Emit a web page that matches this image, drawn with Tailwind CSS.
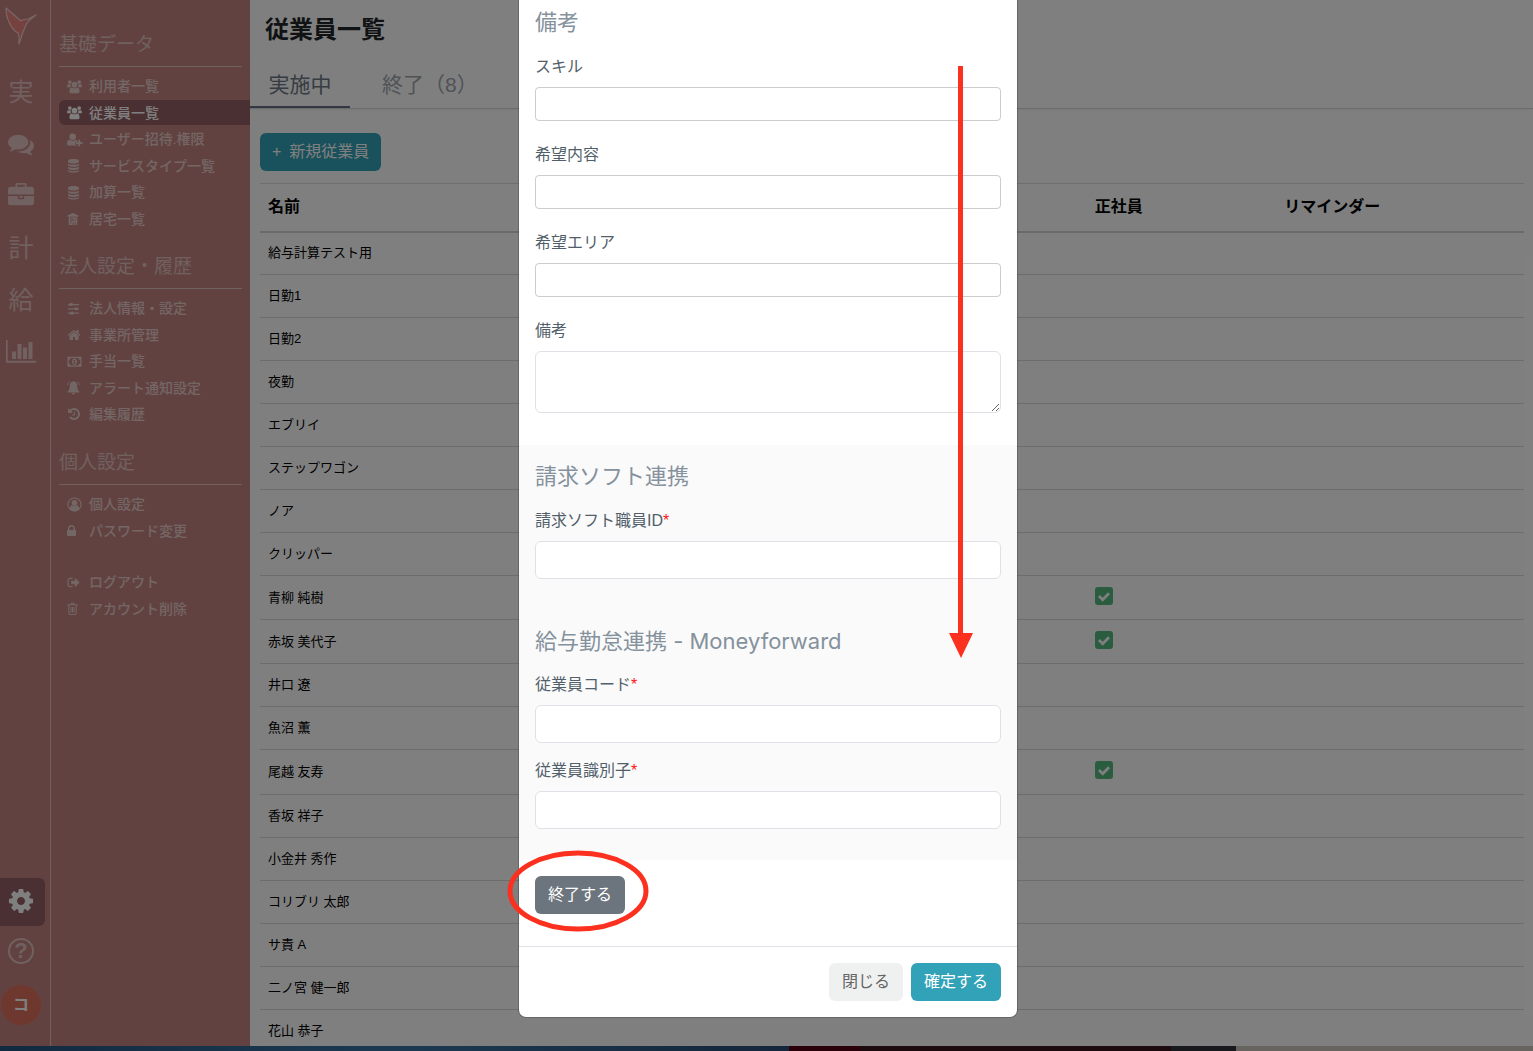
<!DOCTYPE html>
<html lang="ja">
<head>
<meta charset="utf-8">
<meta name="viewport" content="width=device-width, initial-scale=1">
<title>従業員一覧</title>
<script src="https://cdn.jsdelivr.net/npm/@tailwindcss/browser@4"></script>
</head>
<body class="flex h-screen flex-col overflow-hidden bg-white font-['Liberation_Sans','Noto_Sans_CJK_JP',sans-serif] text-base leading-6 text-black">

<svg class="hidden" aria-hidden="true">
  <symbol id="i-users" viewBox="0 0 16 16"><circle cx="3" cy="3.2" r="2"/><circle cx="13" cy="3.2" r="2"/><path d="M0 8.2C0 6.6.5 5.5 1.4 5.5c.8.5 1.9.6 2.9.3C3.8 7 4 8 4.6 8.700H1.200C.5 8.700 0 8.600 0 8.200zM16 8.200c0-1.600-.5-2.700-1.400-2.700-.8.500-1.900.600-2.900.300C12.200 7 12 8 11.400 8.700h3.400c.7 0 1.200-.1 1.200-.5z"/><circle cx="8" cy="6" r="3"/><path d="M2.600 13.200C2.600 10.700 3.500 9 5.300 9c1.600 1.200 3.800 1.200 5.400 0 1.800 0 2.700 1.700 2.700 4.200 0 1.300-.9 2.100-2.100 2.100H4.700c-1.200 0-2.100-.8-2.100-2.100z"/></symbol>
  <symbol id="i-user-plus" viewBox="0 0 17 16"><circle cx="6" cy="5" r="3.500"/><path d="M0 12.500C0 10 1 8.300 2.800 8.300c2 1.400 4.400 1.400 6.400 0 .6 0 1.100.2 1.500.6v1.800H8.800v3h1.900v.8H2C.8 14.500 0 13.700 0 12.500z"/><path d="M12 8.300h2v2.400h2.500v2H14v2.400h-2v-2.400H9.500v-2H12z"/></symbol>
  <symbol id="i-database" viewBox="0 0 14 16"><path d="M1 3.200C1 .4 13 .4 13 3.200v.8C13 6.600 1 6.600 1 4zM1 6c2.500 1.700 9.500 1.700 12 0v1.500c0 2.500-12 2.500-12 0zM1 9.400c2.500 1.700 9.500 1.700 12 0v1.500c0 2.500-12 2.500-12 0zM1 12.800c2.500 1.700 9.500 1.700 12 0v.8c0 2.500-12 2.500-12 0z"/></symbol>
  <symbol id="i-building" viewBox="0 0 14 16"><path d="M7 1l6.500 3v1.500H.5V4zM2 6.300h10V15H2z"/><path d="M4.500 8v5.500M4.500 8H7v2.500M9.300 8v2.500M7.200 12v3M9.700 12v3" stroke="#c48480" stroke-width="1" fill="none"/></symbol>
  <symbol id="i-sliders" viewBox="0 0 14 16"><path d="M1 3.200h12v1.200H1zM1 7.800h12V9H1zM1 12.400h12v1.200H1zM3 2.200h3v3.200H3zM8.500 6.800h3V10h-3zM4 11.400h3v3.200H4z"/></symbol>
  <symbol id="i-home" viewBox="0 0 1792 1792"><path d="M1472 992v480q0 26-19 45t-45 19h-384v-384h-256v384h-384q-26 0-45-19t-19-45v-480q0-1 .5-3t.5-3l575-474 575 474q1 2 1 6zm223-69l-62 74q-8 9-21 11h-3q-13 0-21-7l-692-577-692 577q-12 8-24 7-13-2-21-11l-62-74q-8-10-7-23.5t11-21.5l719-599q32-26 76-26t76 26l244 204v-195q0-14 9-23t23-9h192q14 0 23 9t9 23v408l219 182q10 8 11 21.500t-7 23.500z"/></symbol>
  <symbol id="i-money" viewBox="0 0 16 16"><path fill-rule="evenodd" d="M.5 3h15v10.500H.5zM3.800 4.200c0 1.200-.9 2-2 2v4c1.100 0 2 .9 2 2h8.400c0-1.100.9-2 2-2v-4c-1.100 0-2-.8-2-2z"/><path fill-rule="evenodd" d="M8 4.800a2.500 3.400 0 1 1 0 6.800 2.500 3.400 0 1 1 0-6.800zM7.500 6.300l-1 .9.500.6.400-.3v2h-.9v.8h2.900v-.8h-.9V6.300z"/></symbol>
  <symbol id="i-bell" viewBox="0 0 14 16"><path d="M6.300 1.500a.8.800 0 0 1 1.400 0C10 2 11 3.700 11 6c0 3.500.8 5 2.500 6.500 0 .5-.4 1-1 1h-11c-.6 0-1-.5-1-1C2.200 11 3 9.500 3 6c0-2.300 1-4 3.300-4.500zM5.200 14h3.600a1.800 1.500 0 0 1-3.600 0z"/><path d="M2.800 1.500C1.600 2.500 1 3.800.9 5.500M11.200 1.500c1.200 1 1.800 2.300 1.900 4" fill="none" stroke="currentColor" stroke-width=".9"/></symbol>
  <symbol id="i-history" viewBox="0 0 1792 1792"><path d="M1664 896q0 156-61 298t-164 245-245 164-298 61q-172 0-327-72.500t-264-204.500q-7-10-6.500-22.500t8.500-20.500l137-138q10-9 25-9 16 2 23 12 73 95 179 147t225 52q104 0 198.500-40.500t163.500-109.500 109.500-163.500 40.500-198.500-40.500-198.500-109.500-163.500-163.500-109.500-198.500-40.500q-98 0-188 35.500t-160 101.500l137 138q31 30 14 69-17 40-59 40h-448q-26 0-45-19t-19-45v-448q0-42 40-59 39-17 69 14l130 129q107-101 244.500-156.500t284.500-55.500q156 0 298 61t245 164 164 245 61 298zm-640-288v448q0 14-9 23t-23 9h-320q-14 0-23-9t-9-23v-64q0-14 9-23t23-9h224v-352q0-14 9-23t23-9h64q14 0 23 9t9 23z"/></symbol>
  <symbol id="i-user-circle" viewBox="0 0 16 16"><circle cx="8" cy="8" r="7" fill="none" stroke="currentColor" stroke-width="1.200"/><circle cx="8" cy="6.300" r="3"/><path d="M3 12.200c.3-2 1-3.200 2.500-3.500 1.500 1.200 3.500 1.200 5 0 1.500.3 2.200 1.500 2.500 3.500-2.500 3-7.500 3-10 0z"/></symbol>
  <symbol id="i-lock" viewBox="320 0 1152 1792"><path d="M640 768h512v-192q0-106-75-181t-181-75-181 75-75 181v192zm832 96v576q0 40-28 68t-68 28h-960q-40 0-68-28t-28-68v-576q0-40 28-68t68-28h32v-192q0-184 132-316t316-132 316 132 132 316v192h32q40 0 68 28t28 68z"/></symbol>
  <symbol id="i-logout" viewBox="0 0 14 16"><path d="M6 3.500H3.500C2 3.500 1.200 4.300 1.200 5.800v4.400c0 1.500.8 2.300 2.300 2.300H6" fill="none" stroke="currentColor" stroke-width="1.200"/><path d="M4.500 6h4V3L13.500 8l-5 5v-3h-4z"/></symbol>
  <symbol id="i-trash" viewBox="0 0 12 16"><path d="M.5 4h11M4 4l.6-1.800h2.800L8 4M2 4v9.500c0 .6.400 1 1 1h6c.6 0 1-.4 1-1V4M4.300 6.300v6M6 6.300v6M7.700 6.300v6" fill="none" stroke="currentColor" stroke-width="1.100"/></symbol>
  <symbol id="i-comments" viewBox="0 0 1792 1792"><path d="M1408 768q0 139-94 257t-256.500 186.500-353.500 68.500q-86 0-176-16-124 88-278 128-36 9-86 16h-3q-11 0-20.500-8t-11.500-21q-1-3-1-6.500t.5-6.500 2-6l2.500-5 3.500-5.500 4-5 4.500-5 4-4.500q5-6 23-25t26-29.500 22.500-29 25-38.500 20.500-44q-124-72-195-177t-71-224q0-139 94-257t256.500-186.500 353.500-68.500 353.500 68.500 256.500 186.500 94 257zm384 256q0 120-71 224.500t-195 176.500q10 24 20.500 44t25 38.500 22.500 29 26 29.500 23 25q1 1 4 4.500t4.500 5 4 5 3.500 5.500l2.500 5 2 6 .5 6.500-1 6.500q-3 14-13 22t-22 7q-50-7-86-16-154-40-278-128-90 16-176 16-271 0-472-132 58 4 88 4 161 0 309-45t264-129q125-92 192-212t67-254q0-77-23-152 129 71 204 178t75 230z"/></symbol>
  <symbol id="i-briefcase" viewBox="0 0 1792 1792"><path d="M640 256h512v-128h-512v128zm1152 640v480q0 66-47 113t-113 47h-1472q-66 0-113-47t-47-113v-480h672v160q0 26 19 45t45 19h320q26 0 45-19t19-45v-160h672zm-768 0v128h-256v-128h256zm768-480v384h-1792v-384q0-66 47-113t113-47h352v-160q0-40 28-68t68-28h576q40 0 68 28t28 68v160h352q66 0 113 47t47 113z"/></symbol>
  <symbol id="i-chart" viewBox="0 0 30 24"><path d="M0 0h1.700v20.700H30v2H0zM6 11.500h4V19H6zM11.500 4h4v15h-4zM17 7.500h4V19h-4zM22.500 2h4v17h-4z"/></symbol>
  <symbol id="i-cog" viewBox="128 128 1536 1536"><path d="M1152 896q0-106-75-181t-181-75-181 75-75 181 75 181 181 75 181-75 75-181zm512-109v222q0 12-8 23t-20 13l-185 28q-19 54-39 91 35 50 107 138 10 12 10 25t-9 23q-27 37-99 108t-94 71q-12 0-26-9l-138-108q-44 23-91 38-16 136-29 186-7 28-36 28h-222q-14 0-24.500-8.500t-11.500-21.500l-28-184q-49-16-90-37l-141 107q-10 9-25 9-14 0-25-11-126-114-165-168-7-10-7-23 0-12 8-23 15-21 51-66.500t54-70.500q-27-50-41-99l-183-27q-13-2-21-12.500t-8-23.500v-222q0-12 8-23t19-13l186-28q14-46 39-92-40-57-107-138-10-12-10-24 0-10 9-23 26-36 98.500-107.500t94.500-71.500q13 0 26 10l138 107q44-23 91-38 16-136 29-186 7-28 36-28h222q14 0 24.500 8.500t11.500 21.500l28 184q49 16 90 37l142-107q9-9 24-9 13 0 25 10 129 119 165 170 7 8 7 22 0 12-8 23-15 21-51 66.500t-54 70.500q26 50 41 98l183 28q13 2 21 12.500t8 23.500z"/></symbol>
  <symbol id="i-check" viewBox="0 0 18 18"><path d="M4 9l3.700 3.700L14 6.300" fill="none" stroke="#fff" stroke-width="2.800"/></symbol>
</svg>

<div class="relative flex min-h-0 flex-1 overflow-hidden">

  <!-- Icon rail -->
  <nav class="flex w-[51px] shrink-0 flex-col border-r border-white/50 bg-[#c48480] text-white/50" aria-label="メイン">
    <a href="#" class="block h-[66px] pt-[7px] pl-[5px]" aria-label="ホーム">
      <svg class="h-[38px] w-8" viewBox="0 0 32 38"><path d="M1 1L16 14C18 12 20 12 23 12L31 8L26 12C23 14 22 15 21 18L18 25L14 37C14 33 15 30 13 26C9 24 6 20 4 15C2 11 1 6 1 1z" fill="#ea8480" stroke="#fff" stroke-opacity=".6" stroke-width="1.200" stroke-linejoin="round"/></svg>
    </a>
    <ul class="w-[42px] text-center text-[25px] leading-[52px]">
      <li><a href="#" class="block h-[52px]">実</a></li>
      <li><a href="#" class="flex h-[52px] items-center justify-center" aria-label="メッセージ"><svg class="size-[26px] fill-current"><use href="#i-comments"/></svg></a></li>
      <li><a href="#" class="flex h-[52px] items-center justify-center" aria-label="業務"><svg class="size-[26px] fill-current"><use href="#i-briefcase"/></svg></a></li>
      <li><a href="#" class="block h-[52px]">計</a></li>
      <li><a href="#" class="block h-[52px]">給</a></li>
      <li><a href="#" class="flex h-[52px] items-center justify-center" aria-label="統計"><svg class="h-6 w-[30px] fill-current"><use href="#i-chart"/></svg></a></li>
    </ul>
    <div class="mt-auto pb-[21px]">
      <a href="#" class="flex h-12 w-[45px] items-center rounded-r-md bg-[#946064] pb-0.5 pl-[9px] text-white" aria-label="設定"><svg class="size-6 fill-current"><use href="#i-cog"/></svg></a>
      <a href="#" class="flex h-[50px] w-[42px] items-center justify-center" aria-label="ヘルプ"><span class="flex size-[26px] items-center justify-center rounded-full border-2 border-current text-[22px] leading-none font-bold">?</span></a>
      <a href="#" class="mt-[9px] ml-px flex size-10 items-center justify-center rounded-full bg-[#de705e] text-base font-bold text-white" aria-label="アカウント">コ</a>
    </div>
  </nav>

  <!-- Settings menu -->
  <nav class="w-[199px] shrink-0 bg-[#c48480] pt-[29px] pl-2 text-sm font-medium text-white/60" aria-label="設定メニュー">
    <h2 class="mr-2 mb-1.5 border-b border-white/50 pb-[5px] text-[19px] leading-8 font-normal text-white/50">基礎データ</h2>
    <ul>
      <li class="flex h-[26px] items-center"><a href="#" class="flex h-[25px] w-full items-center pl-2"><span class="w-[22px]"><svg class="size-[15px] fill-current"><use href="#i-users"/></svg></span>利用者一覧</a></li>
      <li class="flex h-[27px] items-center"><a href="#" class="flex h-[25px] w-full items-center rounded-l-md bg-[#946064] pl-2 text-white"><span class="w-[22px]"><svg class="size-[15px] fill-current"><use href="#i-users"/></svg></span>従業員一覧</a></li>
      <li class="flex h-[26px] items-center"><a href="#" class="flex h-[25px] w-full items-center pl-2"><span class="w-[22px]"><svg class="h-[15px] w-4 fill-current"><use href="#i-user-plus"/></svg></span>ユーザー招待.権限</a></li>
      <li class="flex h-[27px] items-center"><a href="#" class="flex h-[25px] w-full items-center pl-2"><span class="w-[22px]"><svg class="h-[15px] w-[13px] fill-current"><use href="#i-database"/></svg></span>サービスタイプ一覧</a></li>
      <li class="flex h-[26px] items-center"><a href="#" class="flex h-[25px] w-full items-center pl-2"><span class="w-[22px]"><svg class="h-[15px] w-[13px] fill-current"><use href="#i-database"/></svg></span>加算一覧</a></li>
      <li class="flex h-[27px] items-center"><a href="#" class="flex h-[25px] w-full items-center pl-2"><span class="w-[22px]"><svg class="h-[14px] w-3 fill-current"><use href="#i-building"/></svg></span>居宅一覧</a></li>
    </ul>

    <h2 class="mt-[19px] mr-2 mb-1.5 border-b border-white/50 pb-[5px] text-[19px] leading-8 font-normal text-white/50">法人設定・履歴</h2>
    <ul>
      <li class="flex h-[26px] items-center"><a href="#" class="flex h-[25px] w-full items-center pl-2"><span class="w-[22px]"><svg class="h-[15px] w-[13px] fill-current"><use href="#i-sliders"/></svg></span>法人情報・設定</a></li>
      <li class="flex h-[27px] items-center"><a href="#" class="flex h-[25px] w-full items-center pl-2"><span class="w-[22px]"><svg class="size-[14px] fill-current"><use href="#i-home"/></svg></span>事業所管理</a></li>
      <li class="flex h-[26px] items-center"><a href="#" class="flex h-[25px] w-full items-center pl-2"><span class="w-[22px]"><svg class="size-[15px] fill-current"><use href="#i-money"/></svg></span>手当一覧</a></li>
      <li class="flex h-[27px] items-center"><a href="#" class="flex h-[25px] w-full items-center pl-2"><span class="w-[22px]"><svg class="h-[15px] w-[13px] fill-current"><use href="#i-bell"/></svg></span>アラート通知設定</a></li>
      <li class="flex h-[26px] items-center"><a href="#" class="flex h-[25px] w-full items-center pl-2"><span class="w-[22px]"><svg class="size-[14px] fill-current"><use href="#i-history"/></svg></span>編集履歴</a></li>
    </ul>

    <h2 class="mt-[20px] mr-2 mb-1.5 border-b border-white/50 pb-[5px] text-[19px] leading-8 font-normal text-white/50">個人設定</h2>
    <ul>
      <li class="flex h-[26px] items-center"><a href="#" class="flex h-[25px] w-full items-center pl-2"><span class="w-[22px]"><svg class="size-[15px] fill-current"><use href="#i-user-circle"/></svg></span>個人設定</a></li>
      <li class="flex h-[27px] items-center"><a href="#" class="flex h-[25px] w-full items-center pl-2"><span class="w-[22px]"><svg class="h-[14px] w-[9px] fill-current"><use href="#i-lock"/></svg></span>パスワード変更</a></li>
    </ul>
    <ul class="mt-[25px]">
      <li class="flex h-[26px] items-center"><a href="#" class="flex h-[25px] w-full items-center pl-2"><span class="w-[22px]"><svg class="h-[15px] w-[13px] fill-current"><use href="#i-logout"/></svg></span>ログアウト</a></li>
      <li class="flex h-[27px] items-center"><a href="#" class="flex h-[25px] w-full items-center pl-2"><span class="w-[22px]"><svg class="h-[15px] w-[11px] fill-current"><use href="#i-trash"/></svg></span>アカウント削除</a></li>
    </ul>
  </nav>

  <!-- Employee list -->
  <main class="min-w-0 flex-1">
    <h1 class="h-[60px] pl-[15px] text-2xl leading-[60px] font-bold text-[#212529]">従業員一覧</h1>
    <div class="flex h-[49px] border-b border-[#d4d6d8] text-[21px] leading-[49px] shadow-xs">
      <a href="#" class="w-[100px] border-b-2 border-[#646e82] text-center text-[#6e7886]">実施中</a>
      <a href="#" class="pl-8 text-[#a0a6ac]">終了（8）</a>
    </div>
    <div class="pt-6 pr-[9px] pl-2.5">
      <button type="button" class="mb-3 flex h-[38px] items-center gap-2 rounded-md bg-[#32a2b8] px-3 text-white"><span>+</span>新規従業員</button>
      <table class="w-full table-fixed border-collapse text-left text-[13px] leading-5">
        <thead class="text-base font-bold">
          <tr class="h-12 border-t border-b-2 border-t-[#dcdcdc] border-b-[#d4d4d4]">
            <th scope="col" class="w-[65.4%] px-2">名前</th>
            <th scope="col" class="w-[15%] px-2">正社員</th>
            <th scope="col" class="px-2">リマインダー</th>
          </tr>
        </thead>
        <tbody class="[&_td]:px-2 [&_td]:py-0 [&_tr]:border-b [&_tr]:border-[#d8d8d8]">
          <tr class="h-[43px]"><td>給与計算テスト用</td><td></td><td></td></tr>
          <tr class="h-[43px]"><td>日勤1</td><td></td><td></td></tr>
          <tr class="h-[43px]"><td>日勤2</td><td></td><td></td></tr>
          <tr class="h-[43px]"><td>夜勤</td><td></td><td></td></tr>
          <tr class="h-[43px]"><td>エブリイ</td><td></td><td></td></tr>
          <tr class="h-[43px]"><td>ステップワゴン</td><td></td><td></td></tr>
          <tr class="h-[43px]"><td>ノア</td><td></td><td></td></tr>
          <tr class="h-[43px]"><td>クリッパー</td><td></td><td></td></tr>
          <tr class="h-11"><td>青柳 純樹</td><td><span class="relative mb-1 block size-[18px]"><input type="checkbox" checked disabled aria-label="正社員" class="block size-[18px] appearance-none rounded-[3px] bg-[#54b880]"><svg class="absolute inset-0 size-[18px]"><use href="#i-check"/></svg></span></td><td></td></tr>
          <tr class="h-11"><td>赤坂 美代子</td><td><span class="relative mb-1 block size-[18px]"><input type="checkbox" checked disabled aria-label="正社員" class="block size-[18px] appearance-none rounded-[3px] bg-[#54b880]"><svg class="absolute inset-0 size-[18px]"><use href="#i-check"/></svg></span></td><td></td></tr>
          <tr class="h-[43px]"><td>井口 遼</td><td></td><td></td></tr>
          <tr class="h-[43px]"><td>魚沼 薫</td><td></td><td></td></tr>
          <tr class="h-[45px]"><td>尾越 友寿</td><td><span class="relative mb-1 block size-[18px]"><input type="checkbox" checked disabled aria-label="正社員" class="block size-[18px] appearance-none rounded-[3px] bg-[#54b880]"><svg class="absolute inset-0 size-[18px]"><use href="#i-check"/></svg></span></td><td></td></tr>
          <tr class="h-[43px]"><td>香坂 祥子</td><td></td><td></td></tr>
          <tr class="h-[43px]"><td>小金井 秀作</td><td></td><td></td></tr>
          <tr class="h-[43px]"><td>コリブリ 太郎</td><td></td><td></td></tr>
          <tr class="h-[43px]"><td>サ責 A</td><td></td><td></td></tr>
          <tr class="h-[43px]"><td>二ノ宮 健一郎</td><td></td><td></td></tr>
          <tr class="h-[43px]"><td>花山 恭子</td><td></td><td></td></tr>
        </tbody>
      </table>
    </div>
  </main>

  <!-- Modal over the list -->
  <div class="absolute inset-0 bg-black/50 pl-[3px]">
    <form class="relative mx-auto max-w-[500px] rounded-b-lg border border-t-0 border-black/20 bg-white bg-clip-padding text-[#525f6b]" role="dialog" aria-modal="true" aria-label="従業員編集">
      <section class="px-4 pt-[9px] pb-8">
        <h2 class="mb-[18px] text-[22px] leading-7 text-[#85919c]">備考</h2>
        <div class="mb-[22px]">
          <label for="skill" class="mb-2 block">スキル</label>
          <input id="skill" type="text" class="block h-[34px] w-full rounded border border-[#ccc] bg-white px-3">
        </div>
        <div class="mb-[22px]">
          <label for="wish" class="mb-2 block">希望内容</label>
          <input id="wish" type="text" class="block h-[34px] w-full rounded border border-[#ccc] bg-white px-3">
        </div>
        <div class="mb-[22px]">
          <label for="area" class="mb-2 block">希望エリア</label>
          <input id="area" type="text" class="block h-[34px] w-full rounded border border-[#ccc] bg-white px-3">
        </div>
        <label for="note" class="mb-2 block">備考</label>
        <textarea id="note" class="block h-[62px] w-full resize-y rounded-md border border-[#dee2e6] bg-white px-3 py-1.5"></textarea>
      </section>

      <section class="bg-[#fafafa] px-4 pt-[18px] pb-[31px]">
        <h2 class="mb-[18px] text-[22px] leading-7 text-[#85919c]">請求ソフト連携</h2>
        <label for="staff" class="mb-2 block">請求ソフト職員ID<span class="text-[#ff1414]">*</span></label>
        <input id="staff" type="text" class="mb-12 block h-[38px] w-full rounded-md border border-[#dee2e6] bg-white px-3">
        <h2 class="mb-[18px] font-['Inter','Noto_Sans_CJK_JP',sans-serif] text-[22px] leading-7 text-[#85919c]">給与勤怠連携 - Moneyforward</h2>
        <label for="code" class="mb-2 block">従業員コード<span class="text-[#ff1414]">*</span></label>
        <input id="code" type="text" class="mb-4 block h-[38px] w-full rounded-md border border-[#dee2e6] bg-white px-3">
        <label for="ident" class="mb-2 block">従業員識別子<span class="text-[#ff1414]">*</span></label>
        <input id="ident" type="text" class="block h-[38px] w-full rounded-md border border-[#dee2e6] bg-white px-3">
      </section>

      <div class="px-4 pt-4 pb-8">
        <button type="button" class="block h-[38px] rounded-md bg-[#6c757d] px-[13px] text-white">終了する</button>
      </div>
      <div class="flex justify-end gap-2 border-t border-[#dee2e6] p-4">
        <button type="button" class="h-[38px] rounded-md bg-[#eff1f1] px-[13px] text-[#666]">閉じる</button>
        <button type="submit" class="h-[38px] rounded-md bg-[#32a2b8] px-[13px] text-white">確定する</button>
      </div>

      <!-- Guide marks: scroll arrow and highlight ring -->
      <svg class="pointer-events-none absolute inset-0 size-full overflow-visible" aria-hidden="true">
        <path d="M439 66h5v567h10l-12 25-12-25h9z" fill="#fb301e"/>
        <ellipse cx="59" cy="891" rx="68" ry="38" fill="none" stroke="#fb301e" stroke-width="5"/>
      </svg>
    </form>
  </div>
</div>

<!-- Sliver of the desktop below the window -->
<div class="flex h-[5px] shrink-0" aria-hidden="true">
  <div class="w-[51.5%] bg-linear-to-r from-[#122a40] via-[#1b3a52] to-[#14263a]"></div>
  <div class="w-[4.6%] bg-[#2a0009]"></div>
  <div class="w-[20.3%] bg-[#1c0a0e]"></div>
  <div class="w-[4.2%] bg-[#17191c]"></div>
  <div class="flex-1 bg-[#67635f]"></div>
</div>
</body>
</html>
